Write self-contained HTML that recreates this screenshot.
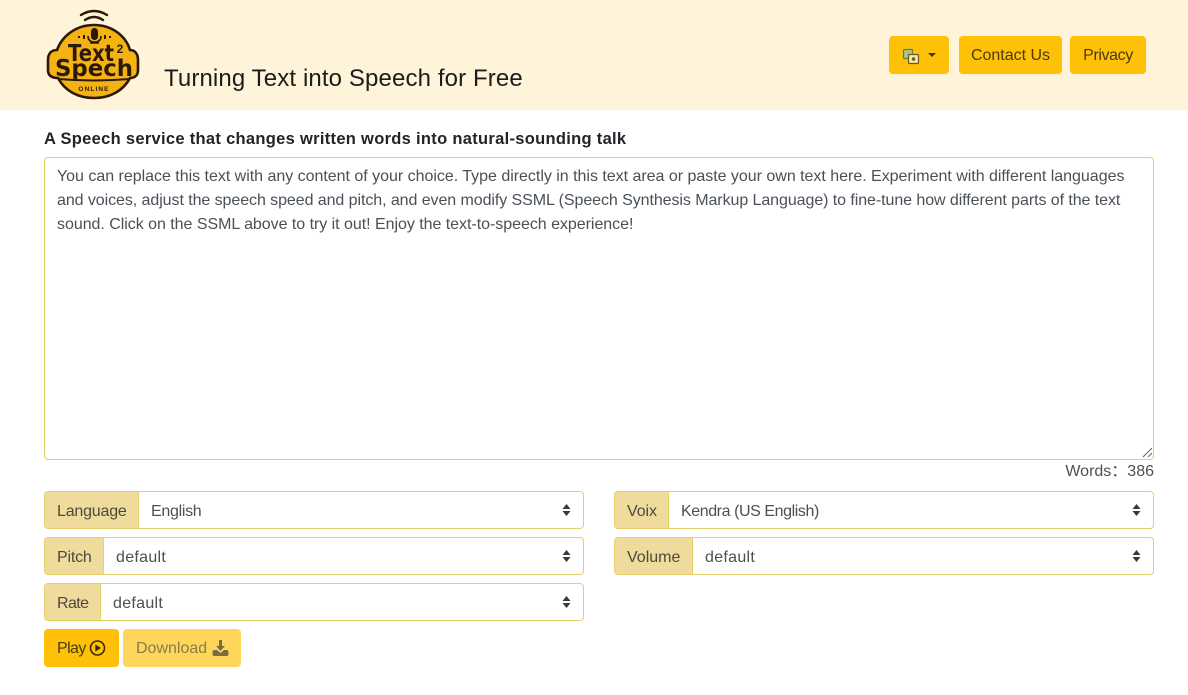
<!DOCTYPE html>
<html><head><meta charset="utf-8"><style>
*{box-sizing:border-box}
html,body{margin:0;padding:0;width:1188px;height:695px;overflow:hidden;background:#fff;font-family:"Liberation Sans",sans-serif;font-size:16px;color:#212529}
.a{position:absolute;white-space:nowrap}
.hdr{left:0;top:0;width:1188px;height:110px;background:#fff3d9}
.btn{position:absolute;background:#ffc107;border-radius:4px;height:38px;line-height:40px;text-align:center;color:#4a3a0e}
.grp{position:absolute;height:38px;border:1px solid #e6d06a;border-radius:4px;background:#fff;overflow:hidden}
.lab{position:absolute;left:0;top:0;height:36px;line-height:39px;background:#efdb9b;color:#4c4a3e;padding-left:12px;border-right:1px solid #e6d06a}
.val{position:absolute;top:0;line-height:39px;color:#495057;white-space:nowrap}
.arr{position:absolute;top:11px;width:9px;height:14px}
.l{position:absolute;left:57px;color:#495057;white-space:nowrap;line-height:24px}
</style></head><body>
<div class="a hdr"></div>
<svg class="a" style="left:44px;top:6px" width="98" height="96" viewBox="0 0 98 96">
<path d="M37 9Q50 1 63 9M41 14Q50 8 59 14" fill="none" stroke="#2b1a0a" stroke-width="2.4" stroke-linecap="round"/>
<path d="M50 19C32 19 18 30 13 44C7 44 4 48 4 54L4 64C4 70 8 72 14 72C21 85 34 92 50 92C66 92 79 85 86 72C91 72 94 69 94 64L94 54C94 48 91 44 86 44C82 30 68 19 50 19Z" fill="#f5b313" stroke="#2b1a0a" stroke-width="2.6"/>
<path d="M14 73Q50 76 86 73" fill="none" stroke="#2b1a0a" stroke-width="2"/>
<rect x="47" y="22" width="7" height="12" rx="3.500" fill="#2b1a0a"/>
<path d="M44 30Q44 36 50.500 36Q57 36 57 30M46 37H55" fill="none" stroke="#2b1a0a" stroke-width="1.600"/>
<path d="M35 30V32M40 29V33M61 29V33M66 30V32" stroke="#2b1a0a" stroke-width="2"/>
<text x="47" y="55" text-anchor="middle" font-family="DejaVu Sans" font-weight="700" font-size="23" fill="#2b1a0a" textLength="46" lengthAdjust="spacingAndGlyphs">Text</text>
<text x="76" y="47" text-anchor="middle" font-family="Liberation Sans" font-weight="700" font-size="12" fill="#2b1a0a">2</text>
<text x="50" y="70" text-anchor="middle" font-family="DejaVu Sans" font-weight="700" font-size="23" fill="#2b1a0a" textLength="78" lengthAdjust="spacingAndGlyphs">Spech</text>
<text x="50" y="85" text-anchor="middle" font-family="Liberation Sans" font-weight="700" font-size="6.500" letter-spacing="1.100" fill="#2b1a0a">ONLINE</text>
</svg>
<div class="a" style="left:164px;top:64px;font-size:24px;line-height:30px;color:#1c1c1c;letter-spacing:.12px">Turning Text into Speech for Free</div>
<div class="btn" style="left:889px;top:36px;width:60px"></div>
<svg class="a" style="left:902px;top:48px" width="18" height="17" viewBox="0 0 18 17"><rect x="1.500" y="1.500" width="9" height="9" rx="1" fill="#a9c48a" stroke="#6c7a3c" stroke-width="1.200"/><rect x="6.500" y="6.500" width="10" height="9" rx="1" fill="#f6e6a0" stroke="#6c5a20" stroke-width="1.200"/><circle cx="11.500" cy="11" r="1.700" fill="#6c5a20"/></svg>
<div class="a" style="left:928px;top:53px;width:0;height:0;border-left:4.500px solid transparent;border-right:4.500px solid transparent;border-top:4.500px solid #4a3208"></div>
<div class="btn" style="left:959px;top:36px;width:103px"><span style="letter-spacing:-.02px">Contact Us</span></div>
<div class="btn" style="left:1070px;top:36px;width:76px"><span style="letter-spacing:-.4px">Privacy</span></div>
<div class="a" style="left:44px;top:127px;font-weight:700;font-size:16.500px;line-height:24px;color:#212529;letter-spacing:.3px">A Speech service that changes written words into natural-sounding talk</div>
<div class="a" style="left:44px;top:157px;width:1110px;height:303px;border:1px solid #d9d65e;border-radius:4px"></div>
<div class="l" style="top:165px;letter-spacing:-.02px">You can replace this text with any content of your choice. Type directly in this text area or paste your own text here. Experiment with different languages</div>
<div class="l" style="top:189px;letter-spacing:-.07px">and voices, adjust the speech speed and pitch, and even modify SSML (Speech Synthesis Markup Language) to fine-tune how different parts of the text</div>
<div class="l" style="top:213px;letter-spacing:-.035px">sound. Click on the SSML above to try it out! Enjoy the text-to-speech experience!</div>
<svg class="a" style="left:1142px;top:447px" width="11" height="11"><path d="M1 10L10 1M6 10L10 6" stroke="#666" stroke-width="1"/></svg>
<div class="a" style="right:34px;top:460px;line-height:24px;color:#495057">Words：386</div>

<div class="grp" style="left:44px;top:491px;width:540px"><div class="lab" style="width:94px;letter-spacing:-.2px">Language</div><div class="val" style="left:106px;letter-spacing:-.3px">English</div><svg class="arr" style="left:517px" viewBox="0 0 9 14"><path d="M4.500 1L8.500 6H.5ZM4.500 13L.5 8H8.500Z" fill="#343a40"/></svg></div>
<div class="grp" style="left:614px;top:491px;width:540px"><div class="lab" style="width:54px;letter-spacing:-.1px">Voix</div><div class="val" style="left:66px;letter-spacing:-.42px">Kendra (US English)</div><svg class="arr" style="left:517px" viewBox="0 0 9 14"><path d="M4.500 1L8.500 6H.5ZM4.500 13L.5 8H8.500Z" fill="#343a40"/></svg></div>
<div class="grp" style="left:44px;top:537px;width:540px"><div class="lab" style="width:59px;letter-spacing:-.2px">Pitch</div><div class="val" style="left:71px;letter-spacing:.3px">default</div><svg class="arr" style="left:517px" viewBox="0 0 9 14"><path d="M4.500 1L8.500 6H.5ZM4.500 13L.5 8H8.500Z" fill="#343a40"/></svg></div>
<div class="grp" style="left:614px;top:537px;width:540px"><div class="lab" style="width:78px">Volume</div><div class="val" style="left:90px;letter-spacing:.3px">default</div><svg class="arr" style="left:517px" viewBox="0 0 9 14"><path d="M4.500 1L8.500 6H.5ZM4.500 13L.5 8H8.500Z" fill="#343a40"/></svg></div>
<div class="grp" style="left:44px;top:583px;width:540px"><div class="lab" style="width:56px;letter-spacing:-.6px">Rate</div><div class="val" style="left:68px;letter-spacing:.3px">default</div><svg class="arr" style="left:517px" viewBox="0 0 9 14"><path d="M4.500 1L8.500 6H.5ZM4.500 13L.5 8H8.500Z" fill="#343a40"/></svg></div>

<div class="btn" style="left:44px;top:629px;width:75px"><span class="a" style="left:13px;top:0;letter-spacing:-.6px">Play</span></div>
<svg class="a" style="left:89px;top:640px" width="17" height="17" viewBox="0 0 17 17"><circle cx="8.500" cy="8" r="7" fill="none" stroke="#3a2c08" stroke-width="1.600"/><path d="M6.300 4.400L12 8L6.300 11.600Z" fill="#3a2c08"/></svg>
<div class="btn" style="left:123px;top:629px;width:118px;background:#ffd65c;color:#8a7a45"><span class="a" style="left:13px;top:0">Download</span></div>
<svg class="a" style="left:212px;top:640px" width="17" height="17" viewBox="0 0 17 17"><path d="M7 0H10V6H13L8.500 11L4 6H7Z" fill="#7a6c40"/><path d="M2.500 10H5L8.500 13L12 10H14.500C16 10 16.500 11 16.500 12.500V14C16.500 15.500 15.500 16 14.500 16H2.500C1.500 16 .5 15.500 .5 14V12.500C.5 11 1 10 2.500 10Z" fill="#7a6c40"/></svg>
</body></html>
